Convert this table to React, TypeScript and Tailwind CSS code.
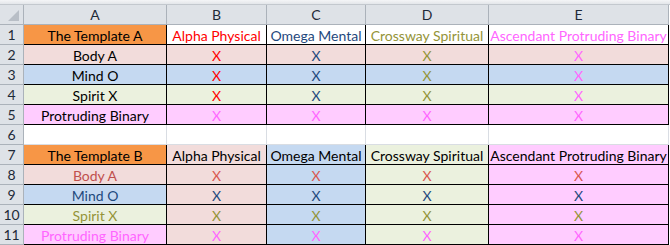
import React from "react";

const RED = "text-[#ff0000]";
const NAVY = "text-[#1f497d]";
const OLIVE = "text-[#949438]";
const MAG = "text-[#ff66ff]";
const BROWN = "text-[#c0504d]";

const PINK = "bg-[#f2dcdb]";
const BLUE = "bg-[#c5d9f1]";
const GREEN = "bg-[#ebf1de]";
const LILAC = "bg-[#ffccff]";
const ORANGE = "bg-[#f79646]";

type Cell = { t: string; bg: string; c: string };

const rows: { n: string; cells: Cell[] }[] = [
  {
    n: "1",
    cells: [
      { t: "The Template A", bg: ORANGE, c: "text-black" },
      { t: "Alpha Physical", bg: "bg-white", c: RED },
      { t: "Omega Mental", bg: "bg-white", c: NAVY },
      { t: "Crossway Spiritual", bg: "bg-white", c: OLIVE },
      { t: "Ascendant Protruding Binary", bg: "bg-white", c: MAG },
    ],
  },
  {
    n: "2",
    cells: [
      { t: "Body A", bg: PINK, c: "text-black" },
      { t: "X", bg: PINK, c: RED },
      { t: "X", bg: PINK, c: NAVY },
      { t: "X", bg: PINK, c: OLIVE },
      { t: "X", bg: PINK, c: MAG },
    ],
  },
  {
    n: "3",
    cells: [
      { t: "Mind O", bg: BLUE, c: "text-black" },
      { t: "X", bg: BLUE, c: RED },
      { t: "X", bg: BLUE, c: NAVY },
      { t: "X", bg: BLUE, c: OLIVE },
      { t: "X", bg: BLUE, c: MAG },
    ],
  },
  {
    n: "4",
    cells: [
      { t: "Spirit X", bg: GREEN, c: "text-black" },
      { t: "X", bg: GREEN, c: RED },
      { t: "X", bg: GREEN, c: NAVY },
      { t: "X", bg: GREEN, c: OLIVE },
      { t: "X", bg: GREEN, c: MAG },
    ],
  },
  {
    n: "5",
    cells: [
      { t: "Protruding Binary", bg: LILAC, c: "text-black" },
      { t: "X", bg: LILAC, c: MAG },
      { t: "X", bg: LILAC, c: MAG },
      { t: "X", bg: LILAC, c: MAG },
      { t: "X", bg: LILAC, c: MAG },
    ],
  },
  {
    n: "7",
    cells: [
      { t: "The Template B", bg: ORANGE, c: "text-black" },
      { t: "Alpha Physical", bg: PINK, c: "text-black" },
      { t: "Omega Mental", bg: BLUE, c: "text-black" },
      { t: "Crossway Spiritual", bg: GREEN, c: "text-black" },
      { t: "Ascendant Protruding Binary", bg: LILAC, c: "text-black" },
    ],
  },
  {
    n: "8",
    cells: [
      { t: "Body A", bg: PINK, c: BROWN },
      { t: "X", bg: PINK, c: "text-[#d9574f]" },
      { t: "X", bg: BLUE, c: "text-[#d9574f]" },
      { t: "X", bg: GREEN, c: "text-[#d9574f]" },
      { t: "X", bg: LILAC, c: "text-[#d9574f]" },
    ],
  },
  {
    n: "9",
    cells: [
      { t: "Mind O", bg: BLUE, c: NAVY },
      { t: "X", bg: PINK, c: NAVY },
      { t: "X", bg: BLUE, c: NAVY },
      { t: "X", bg: GREEN, c: NAVY },
      { t: "X", bg: LILAC, c: NAVY },
    ],
  },
  {
    n: "10",
    cells: [
      { t: "Spirit X", bg: GREEN, c: OLIVE },
      { t: "X", bg: PINK, c: OLIVE },
      { t: "X", bg: BLUE, c: OLIVE },
      { t: "X", bg: GREEN, c: OLIVE },
      { t: "X", bg: LILAC, c: OLIVE },
    ],
  },
  {
    n: "11",
    cells: [
      { t: "Protruding Binary", bg: LILAC, c: MAG },
      { t: "X", bg: PINK, c: MAG },
      { t: "X", bg: BLUE, c: MAG },
      { t: "X", bg: GREEN, c: MAG },
      { t: "X", bg: LILAC, c: MAG },
    ],
  },
];

const HDR = "bg-[#dee2e7] text-[#1e2a38]";
const HB = "border-[#abb2ba]";

function RowNum({ n }: { n: string }) {
  return (
    <div
      className={`${HDR} border-r border-b ${HB} h-[20px] pt-[1px] flex items-center justify-center`}
    >
      {n}
    </div>
  );
}

function DataCell({ cell }: { cell: Cell }) {
  return (
    <div
      className={`${cell.bg} ${cell.c} border-r border-b border-black h-[20px] pt-[2px] flex items-center justify-center whitespace-nowrap overflow-hidden`}
    >
      {cell.t}
    </div>
  );
}

export default function App() {
  return (
    <div
      className="w-[670px] h-[245px] bg-white overflow-hidden text-[14px] leading-none"
      style={{ fontFamily: "Lato, 'Liberation Sans', sans-serif" }}
    >
      <div className="h-[5px] bg-gradient-to-b from-[#f4f5f7] to-[#e3e6ea] border-b border-[#c3c8ce]" />
      <div className="grid grid-cols-[24px_143px_100px_99px_123px_180px]">
        <div className={`${HDR} border-r border-b ${HB} h-[20px] relative`}>
          <svg
            className="absolute left-[8px] top-[5px]"
            width="11"
            height="11"
            viewBox="0 0 11 11"
          >
            <polygon points="11,0 11,11 0,11" fill="#b8bec6" />
          </svg>
        </div>
        {["A", "B", "C", "D", "E"].map((l) => (
          <div
            key={l}
            className={`${HDR} border-r border-b ${HB} h-[20px] pt-[1px] flex items-center justify-center`}
          >
            {l}
          </div>
        ))}
        {rows.slice(0, 5).map((r) => (
          <React.Fragment key={r.n}>
            <RowNum n={r.n} />
            {r.cells.map((c, i) => (
              <DataCell key={i} cell={c} />
            ))}
          </React.Fragment>
        ))}
        <RowNum n="6" />
        {[0, 1, 2, 3, 4].map((i) => (
          <div
            key={i}
            className="bg-white border-r border-b border-[#d9dde3] h-[20px]"
          />
        ))}
        {rows.slice(5).map((r) => (
          <React.Fragment key={r.n}>
            <RowNum n={r.n} />
            {r.cells.map((c, i) => (
              <DataCell key={i} cell={c} />
            ))}
          </React.Fragment>
        ))}
      </div>
    </div>
  );
}
